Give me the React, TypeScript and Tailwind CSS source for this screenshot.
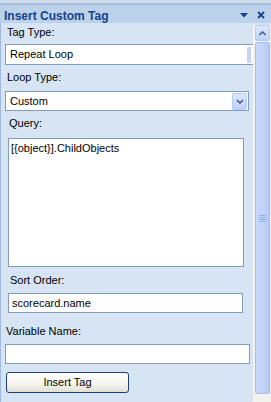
const font = { fontFamily: '"Liberation Sans", Arial, sans-serif' }

function Label({ text, indent }: { text: string; indent: string }) {
  return <div className={`h-[13px] text-[11px] leading-[13px] text-black ${indent}`}>{text}</div>
}

function ScrollBar() {
  return (
    <div className="flex w-[18px] shrink-0 flex-col bg-[#d6e4f3] pt-[2px]">
      <div className="flex flex-1 flex-col border-l border-[#eef2f8] bg-[#f3f3ee] pl-[1px] pr-[1px]">
        <div className="flex h-[16px] w-[15px] items-center justify-center rounded-[2px] border border-[#b7cbf3] bg-gradient-to-b from-[#dfe8fd] to-[#bfd1fb]">
          <svg width="7" height="5" viewBox="0 0 7 5">
            <path d="M0.5 4 L3.5 1 L6.5 4" fill="none" stroke="#4d6185" strokeWidth="1.6" />
          </svg>
        </div>
        <div className="mt-[1px] flex h-[352px] w-[15px] items-center justify-center rounded-[2px] border border-[#a6bdf0] bg-gradient-to-r from-[#c9d8fd] via-[#c3d4fd] to-[#b5c9f9]">
          <div className="flex flex-col gap-[1px]">
            <div className="h-[1px] w-[7px] bg-[#8fb0ef]" />
            <div className="h-[1px] w-[7px] bg-[#8fb0ef]" />
            <div className="h-[1px] w-[7px] bg-[#8fb0ef]" />
            <div className="h-[1px] w-[7px] bg-[#8fb0ef]" />
          </div>
        </div>
      </div>
    </div>
  )
}

export default function App() {
  return (
    <div className="flex h-[402px] w-[271px] flex-col overflow-hidden bg-[#d6e4f3]" style={font}>
      <div className="h-[3px] bg-[#cfdcec]" />
      <div className="h-[2px] bg-[#a3bbdc]" />
      <div className="flex h-[18px] items-start bg-[#bcd1ea] pl-[4px]">
        <span className="pt-[4px] text-[12px] font-bold leading-[14px] text-[#15428b]">Insert Custom Tag</span>
        <div className="ml-auto flex items-center gap-[9px] pr-[6px] pt-[6px]">
          <svg width="8" height="5" viewBox="0 0 8 5">
            <path d="M0 0 H8 L4 4.5 Z" fill="#15428b" />
          </svg>
          <svg width="8" height="8" viewBox="0 0 8 8">
            <path d="M1 1 L7 7 M7 1 L1 7" stroke="#15428b" strokeWidth="1.8" />
          </svg>
        </div>
      </div>
      <div className="flex flex-1">
        <div className="w-[253px] shrink-0 overflow-hidden border-l border-[#a0b9dc]">
          <div className="mt-[3px]">
            <Label text="Tag Type:" indent="ml-[6px]" />
          </div>
          <div className="ml-[4px] mt-[5px] flex h-[21px] w-[260px] items-center border border-[#7f9db9] bg-white pl-[4px] text-[11px]">
            Repeat Loop
            <div className="ml-[174px] h-[16px] w-[4px] bg-[#c5d5f7]" />
          </div>
          <div className="mt-[6px]">
            <Label text="Loop Type:" indent="ml-[6px]" />
          </div>
          <div className="ml-[4px] mt-[7px] flex h-[20px] w-[244px] items-center border border-[#7f9db9] bg-white pl-[4px] pr-[1px] text-[11px]">
            <span className="flex-1">Custom</span>
            <div className="flex h-[17px] w-[15px] items-center justify-center rounded-[2px] border border-[#b7cbf3] bg-gradient-to-b from-[#dce7fd] to-[#bcd0fb]">
              <svg width="8" height="5" viewBox="0 0 8 5">
                <path d="M1 1 L4 4 L7 1" fill="none" stroke="#4d6185" strokeWidth="1.7" />
              </svg>
            </div>
          </div>
          <div className="mt-[6px]">
            <Label text="Query:" indent="ml-[8px]" />
          </div>
          <div className="ml-[7px] mt-[8px] h-[129px] w-[236px] border border-[#7f9db9] bg-white pl-[2px] pt-[3px] text-[11px] leading-[13px]">
            [{'{'}object{'}'}].ChildObjects
          </div>
          <div className="mt-[7px]">
            <Label text="Sort Order:" indent="ml-[9px]" />
          </div>
          <div className="ml-[7px] mt-[6px] flex h-[20px] w-[235px] items-center border border-[#7f9db9] bg-white pl-[3px] text-[11px]">
            scorecard.name
          </div>
          <div className="mt-[12px]">
            <Label text="Variable Name:" indent="ml-[5px]" />
          </div>
          <div className="ml-[4px] mt-[6px] h-[20px] w-[245px] border border-[#7f9db9] bg-white" />
          <button
            type="button"
            className="ml-[5px] mt-[8px] flex h-[21px] w-[123px] items-center justify-center rounded-[3px] border border-[#1c3f6e] bg-gradient-to-b from-white via-[#f8f7f2] to-[#e2e0d4] text-[11px] text-black"
          >
            Insert Tag
          </button>
        </div>
        <ScrollBar />
      </div>
    </div>
  )
}
